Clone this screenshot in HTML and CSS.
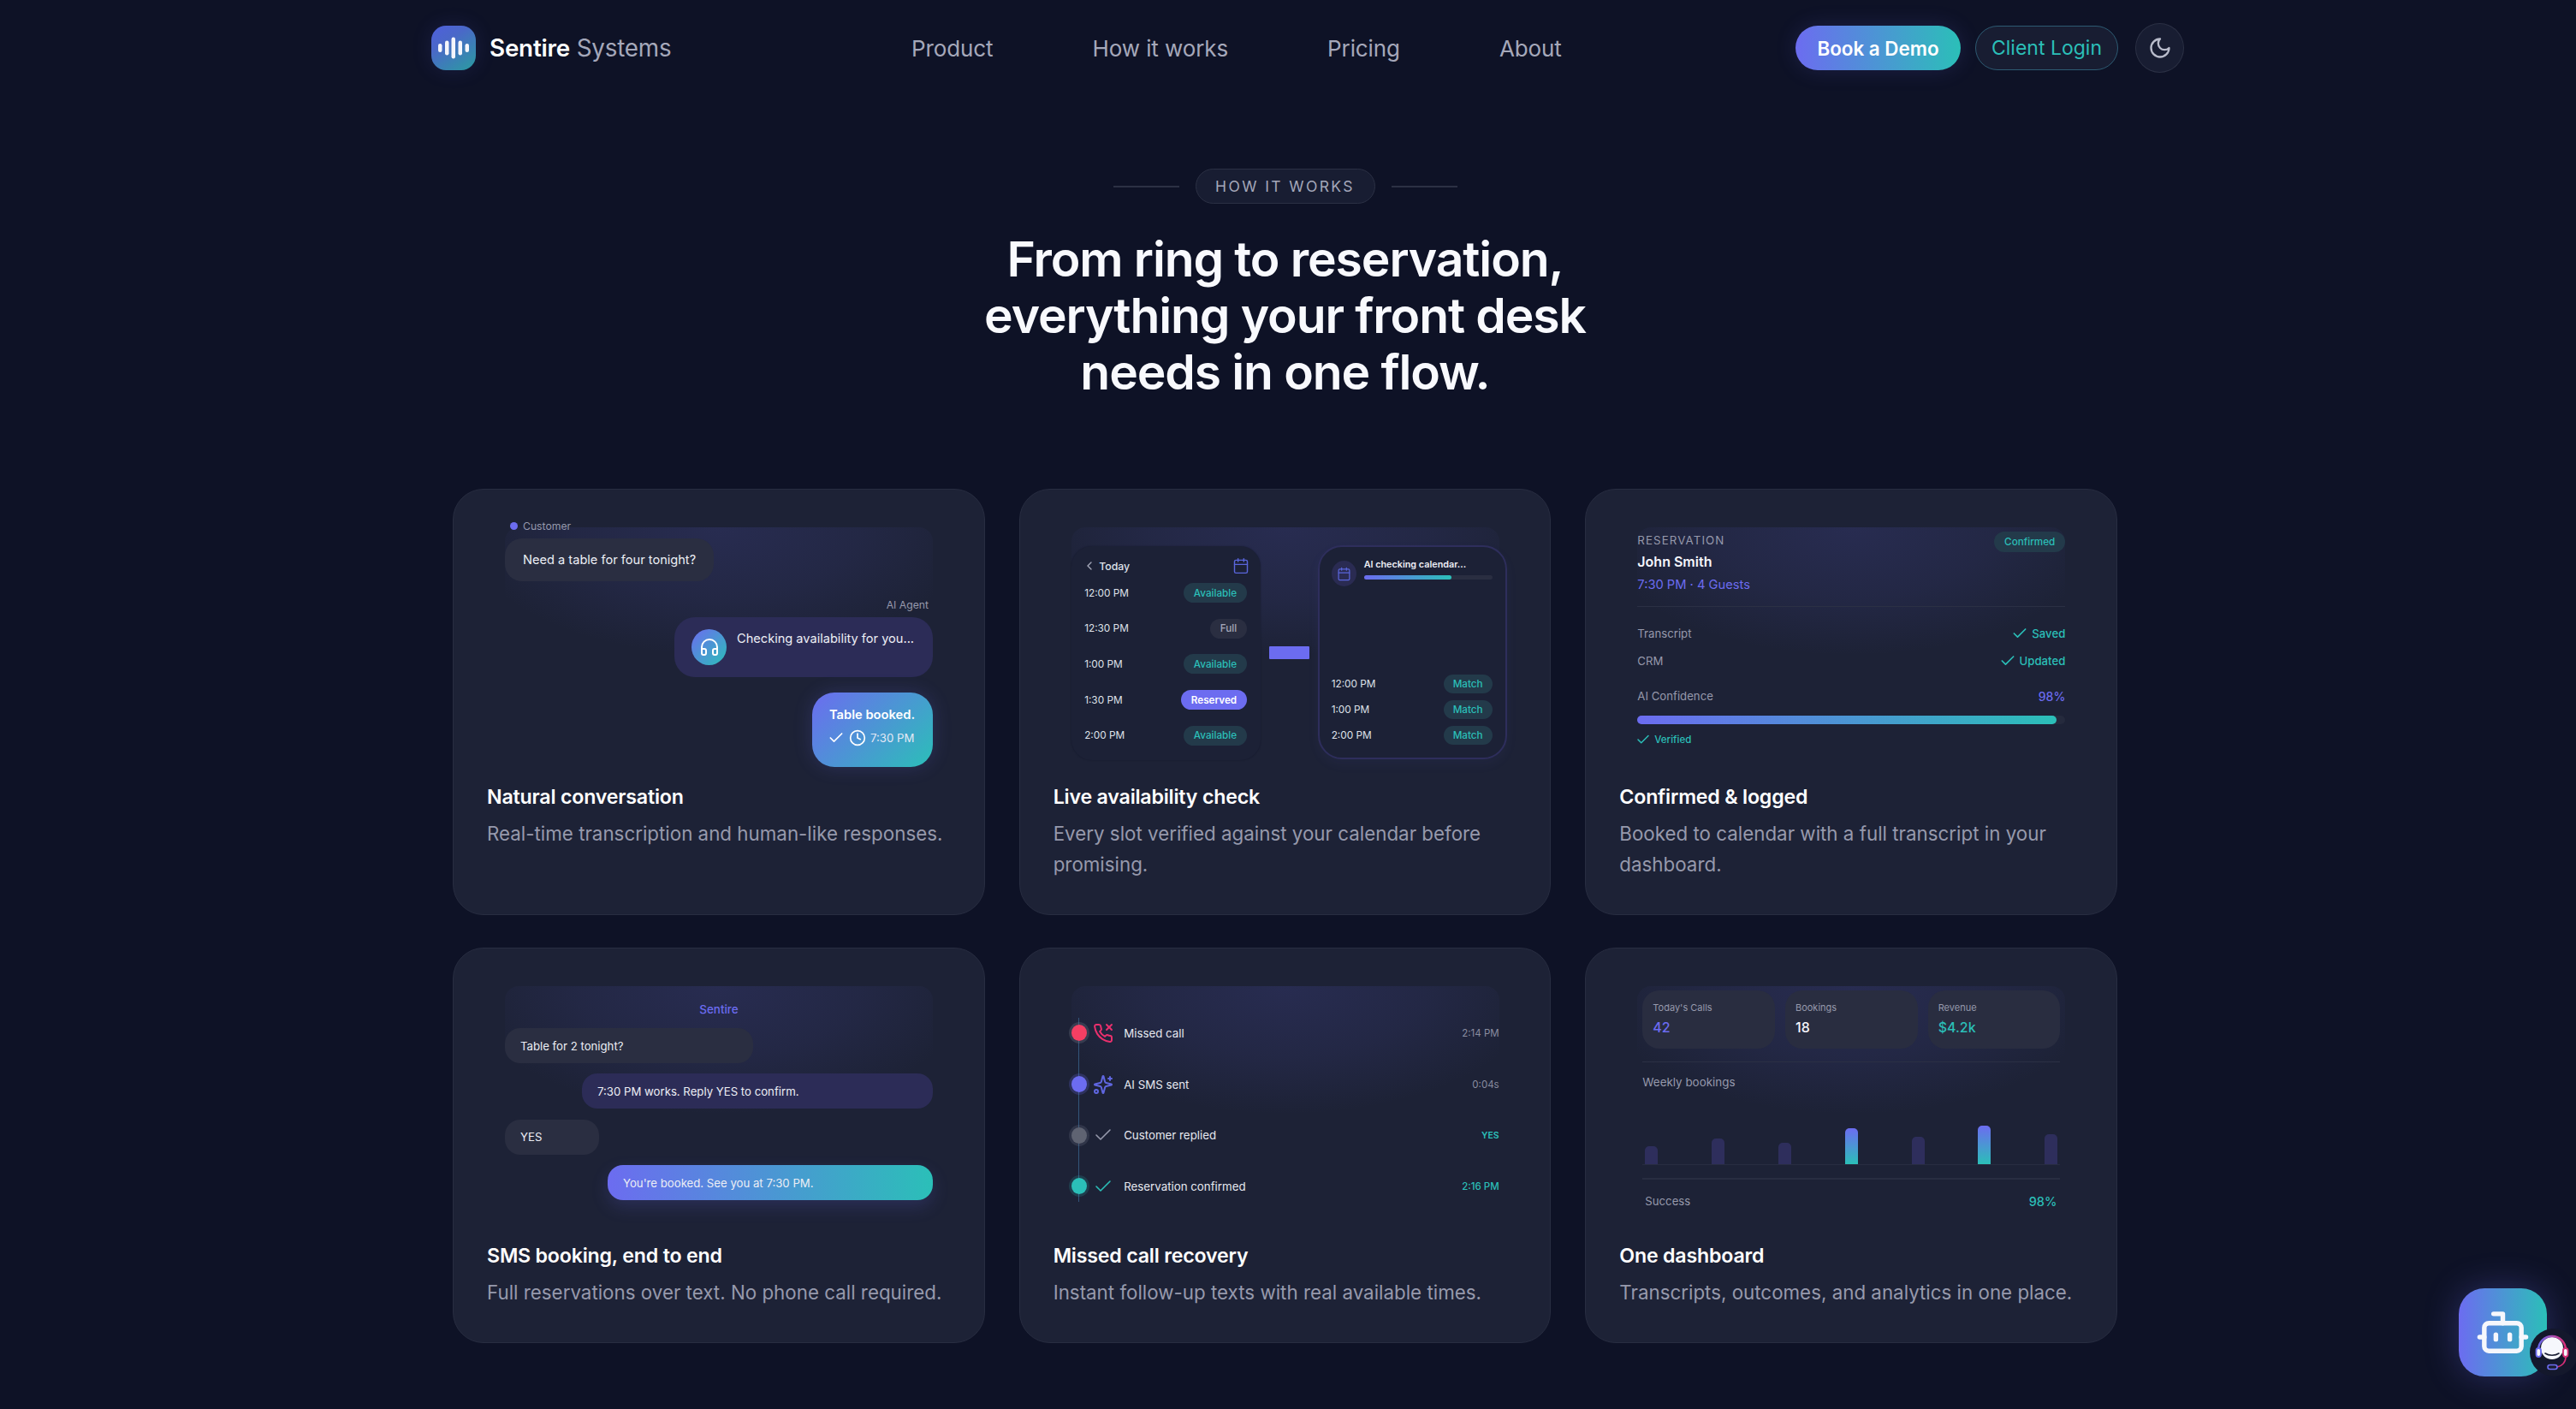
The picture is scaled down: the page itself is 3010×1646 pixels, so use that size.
FILE: index.html
```html
<!DOCTYPE html>
<html lang="en">
<head>
<meta charset="utf-8">
<title>Sentire Systems – How it works</title>
<link rel="stylesheet" href="styles.css">
</head>
<body>
<header class="nav">
  <a class="brand">
    <span class="logo">
      <svg viewBox="0 0 52 52" width="52" height="52"><g fill="#f4f5fb"><rect x="8" y="21" width="4.5" height="10" rx="2.2"/><rect x="16" y="17.5" width="4.5" height="17" rx="2.2"/><rect x="23.5" y="13.5" width="4.5" height="25" rx="2.2"/><rect x="31.5" y="17.5" width="4.5" height="17" rx="2.2"/><rect x="39.5" y="21" width="4.5" height="10" rx="2.2"/></g></svg>
    </span>
    <span class="brand-name"><b>Sentire</b> Systems</span>
  </a>
  <nav class="links"><a>Product</a><a>How it works</a><a>Pricing</a><a>About</a></nav>
  <div class="actions">
    <a class="btn btn-primary">Book a Demo</a>
    <a class="btn btn-ghost">Client Login</a>
    <a class="moon"><svg class="ic" viewBox="0 0 24 24" width="28" height="28"><path d="M12 3a6 6 0 0 0 9 9 9 9 0 1 1-9-9Z"/></svg></a>
  </div>
</header>

<main class="section">
  <div class="kicker"><i></i><span>HOW IT WORKS</span><i></i></div>
  <h1>From ring to reservation,<br>everything your front desk<br>needs in one flow.</h1>

  <div class="grid">
    <article class="card">
      <div class="visual">
        <div class="who"><i class="who-dot"></i>Customer</div>
        <div class="bubble b-grey b1">Need a table for four tonight?</div>
        <div class="who who-right">AI Agent</div>
        <div class="bubble b-indigo b2">
          <span class="avatar"><svg class="ic" viewBox="0 0 24 24" width="24" height="24"><path d="M3 14h3a2 2 0 0 1 2 2v3a2 2 0 0 1-2 2H5a2 2 0 0 1-2-2v-7a9 9 0 0 1 18 0v7a2 2 0 0 1-2 2h-1a2 2 0 0 1-2-2v-3a2 2 0 0 1 2-2h3"/></svg></span>
          <span class="b2-text">Checking availability for you...</span>
        </div>
        <div class="booked">
          <strong>Table booked.</strong>
          <span class="booked-row">
            <svg class="ic booked-check" viewBox="0 0 24 24" width="20" height="20"><path d="M20 6 9 17l-5-5"/></svg>
            <svg class="ic" viewBox="0 0 24 24" width="20" height="20"><circle cx="12" cy="12" r="10"/><path d="M12 6v6l4 2"/></svg>
            <em>7:30 PM</em>
          </span>
        </div>
      </div>
      <h3>Natural conversation</h3>
      <p>Real-time transcription and human-like responses.</p>
    </article>

    <article class="card">
      <div class="visual">
        <div class="avail">
          <div class="panel">
            <div class="panel-head">
              <svg class="ic chev" viewBox="0 0 24 24" width="16" height="16"><path d="m15 18-6-6 6-6"/></svg>
              <span>Today</span>
              <svg class="ic cal" viewBox="0 0 24 24" width="20" height="20"><path d="M8 2v4"/><path d="M16 2v4"/><rect x="3" y="4" width="18" height="18" rx="2"/><path d="M3 10h18"/></svg>
            </div>
            <div class="slot"><span>12:00 PM</span><b class="pill teal">Available</b></div>
            <div class="slot"><span>12:30 PM</span><b class="pill grey">Full</b></div>
            <div class="slot"><span>1:00 PM</span><b class="pill teal">Available</b></div>
            <div class="slot"><span>1:30 PM</span><b class="pill violet">Reserved</b></div>
            <div class="slot"><span>2:00 PM</span><b class="pill teal">Available</b></div>
          </div>
          <div class="connector"></div>
          <div class="panel panel-ai">
            <div class="ai-head">
              <span class="ai-icon"><svg class="ic cal" viewBox="0 0 24 24" width="17" height="17"><path d="M8 2v4"/><path d="M16 2v4"/><rect x="3" y="4" width="18" height="18" rx="2"/><path d="M3 10h18"/></svg></span>
              <div class="ai-body">
                <div class="ai-title">AI checking calendar...</div>
                <div class="progress"><i></i></div>
              </div>
            </div>
            <div class="ai-rows">
              <div class="ai-row"><span>12:00 PM</span><b class="pill teal">Match</b></div>
              <div class="ai-row"><span>1:00 PM</span><b class="pill teal">Match</b></div>
              <div class="ai-row"><span>2:00 PM</span><b class="pill teal">Match</b></div>
            </div>
          </div>
        </div>
      </div>
      <h3>Live availability check</h3>
      <p>Every slot verified against your calendar before promising.</p>
    </article>

    <article class="card">
      <div class="visual">
        <div class="res-head">
          <div>
            <div class="res-label">RESERVATION</div>
            <div class="res-name">John Smith</div>
            <div class="res-time">7:30 PM · 4 Guests</div>
          </div>
          <b class="pill teal res-pill">Confirmed</b>
        </div>
        <div class="res-row first"><span>Transcript</span><b><svg class="ic" viewBox="0 0 24 24" width="20" height="20"><path d="M20 6 9 17l-5-5"/></svg>Saved</b></div>
        <div class="res-row"><span>CRM</span><b><svg class="ic" viewBox="0 0 24 24" width="20" height="20"><path d="M20 6 9 17l-5-5"/></svg>Updated</b></div>
        <div class="res-row conf"><span>AI Confidence</span><strong>98%</strong></div>
        <div class="meter"><i></i></div>
        <div class="verified"><svg class="ic" viewBox="0 0 24 24" width="18" height="18"><path d="M20 6 9 17l-5-5"/></svg>Verified</div>
      </div>
      <h3>Confirmed &amp; logged</h3>
      <p>Booked to calendar with a full transcript in your dashboard.</p>
    </article>

    <article class="card">
      <div class="visual">
        <div class="sms-from">Sentire</div>
        <div class="sms">
          <div class="msg b-grey w58">Table for 2 tonight?</div>
          <div class="msg b-indigo w82 right">7:30 PM works. Reply YES to confirm.</div>
          <div class="msg b-grey w22">YES</div>
          <div class="msg grad w76 right">You're booked. See you at 7:30 PM.</div>
        </div>
      </div>
      <h3>SMS booking, end to end</h3>
      <p>Full reservations over text. No phone call required.</p>
    </article>

    <article class="card">
      <div class="visual">
        <div class="timeline">
          <div class="tl-row">
            <i class="tl-dot red"></i>
            <svg class="ic tl-ic c-red" viewBox="0 0 24 24" width="24" height="24"><path d="m16 2 6 6"/><path d="m22 2-6 6"/><path d="M22 16.92v3a2 2 0 0 1-2.18 2 19.79 19.79 0 0 1-8.63-3.07 19.5 19.5 0 0 1-6-6 19.79 19.79 0 0 1-3.07-8.67A2 2 0 0 1 4.11 2h3a2 2 0 0 1 2 1.72 12.84 12.84 0 0 0 .7 2.81 2 2 0 0 1-.45 2.11L8.09 9.91a16 16 0 0 0 6 6l1.27-1.27a2 2 0 0 1 2.11-.45 12.84 12.84 0 0 0 2.81.7A2 2 0 0 1 22 16.92z"/></svg>
            <span>Missed call</span><small>2:14 PM</small>
          </div>
          <div class="tl-row">
            <i class="tl-dot vio"></i>
            <svg class="ic tl-ic c-vio" viewBox="0 0 24 24" width="24" height="24"><path d="M9.937 15.5A2 2 0 0 0 8.5 14.063l-6.135-1.582a.5.5 0 0 1 0-.962L8.5 9.936A2 2 0 0 0 9.937 8.5l1.582-6.135a.5.5 0 0 1 .963 0L14.063 8.5A2 2 0 0 0 15.5 9.937l6.135 1.581a.5.5 0 0 1 0 .964L15.5 14.063a2 2 0 0 0-1.437 1.437l-1.582 6.135a.5.5 0 0 1-.963 0z"/><path d="M20 3v4"/><path d="M22 5h-4"/><circle cx="4" cy="20" r="2"/></svg>
            <span>AI SMS sent</span><small>0:04s</small>
          </div>
          <div class="tl-row">
            <i class="tl-dot gry"></i>
            <svg class="ic tl-ic c-gry" viewBox="0 0 24 24" width="24" height="24"><path d="M20 6 9 17l-5-5"/></svg>
            <span>Customer replied</span><small class="s-teal s-bold">YES</small>
          </div>
          <div class="tl-row">
            <i class="tl-dot tea"></i>
            <svg class="ic tl-ic c-tea" viewBox="0 0 24 24" width="24" height="24"><path d="M20 6 9 17l-5-5"/></svg>
            <span>Reservation confirmed</span><small class="s-teal s-med">2:16 PM</small>
          </div>
        </div>
      </div>
      <h3>Missed call recovery</h3>
      <p>Instant follow-up texts with real available times.</p>
    </article>

    <article class="card">
      <div class="visual">
        <div class="dash">
          <div class="stats">
            <div class="stat"><span>Today's Calls</span><b class="c-violet">42</b></div>
            <div class="stat"><span>Bookings</span><b>18</b></div>
            <div class="stat"><span>Revenue</span><b class="c-teal">$4.2k</b></div>
          </div>
          <div class="weekly">Weekly bookings</div>
          <div class="bars">
            <i style="height:21px"></i><i style="height:30px"></i><i style="height:25px"></i><i class="hi" style="height:42px"></i><i style="height:32px"></i><i class="hi" style="height:45px"></i><i style="height:35px"></i>
          </div>
          <div class="success"><span>Success</span><b>98%</b></div>
        </div>
      </div>
      <h3>One dashboard</h3>
      <p>Transcripts, outcomes, and analytics in one place.</p>
    </article>
  </div>
</main>

<aside class="fab">
  <svg class="ic" viewBox="0 0 24 24" width="65" height="65"><path d="M12 8V4H8"/><rect x="4" y="8" width="16" height="12" rx="2"/><path d="M2 14h2"/><path d="M20 14h2"/><path d="M15 13v2"/><path d="M9 13v2"/></svg>
  <span class="fab-badge">
    <svg viewBox="0 0 56 56" width="56" height="56">
      <defs><linearGradient id="band" x1="0" x2="1" y1="0" y2="0"><stop offset="0" stop-color="#6c6cf0"/><stop offset="1" stop-color="#e0307a"/></linearGradient></defs>
      <circle cx="26" cy="23" r="13" fill="#f6f7fc"/>
      <path d="M18 29c4 3 12 3 16 0" fill="none" stroke="#1a1e33" stroke-width="1.6" stroke-linecap="round"/>
      <path d="M10 25a16 16 0 0 1 32 0" fill="none" stroke="url(#band)" stroke-width="2.4"/>
      <rect x="7.5" y="23" width="5.5" height="10" rx="2.7" fill="#f6f7fc" stroke="#6c6cf0" stroke-width="1.8"/>
      <rect x="39" y="23" width="5.5" height="10" rx="2.7" fill="#f6f7fc" stroke="#d62f78" stroke-width="1.8"/>
      <path d="M42 33c0 7-5 11-10 12" fill="none" stroke="#d62f78" stroke-width="1.6"/>
      <rect x="21" y="42.5" width="11" height="5" rx="2.5" fill="#1a1e33" stroke="#6c6cf0" stroke-width="1.6"/>
    </svg>
  </span>
</aside>
</body>
</html>
```

FILE: styles.css
```css
* { box-sizing: border-box; }
html, body { margin: 0; height: 1646px; overflow: hidden; }
body {
  background: #0e1226;
  color: #f5f6fb;
  font-family: Inter, "Noto Sans", "Liberation Sans", sans-serif;
  -webkit-font-smoothing: antialiased;
}
svg { display: block; flex: none; }
.ic { fill: none; stroke: currentColor; stroke-width: 2; stroke-linecap: round; stroke-linejoin: round; }

/* nav */
.nav { display: flex; align-items: center; height: 112px; padding-left: 504px; width: 2552px; }
.brand { display: flex; align-items: center; gap: 16px; width: 561px; }
.logo {
  width: 52px; height: 52px; border-radius: 17px;
  background: linear-gradient(145deg, #4f5fdc 0%, #4a68c8 35%, #2a9ca0 100%);
  box-shadow: 0 0 24px rgba(100, 100, 240, .14);
}
.brand-name { font-size: 27.8px; letter-spacing: -.2px; color: #a5a8ba; }
.brand-name b { font-weight: 600; color: #fff; }
.links { display: flex; gap: 116px; font-size: 26px; letter-spacing: -.1px; color: #a5a8ba; }
.actions { display: flex; align-items: center; margin-left: auto; }
.btn { display: flex; align-items: center; justify-content: center; height: 52px; border-radius: 26px; }
.btn-primary { width: 193px; font-size: 22.4px; font-weight: 600; color: #fff; background: linear-gradient(90deg, #6c6cf0, #2bbfb8); box-shadow: 0 0 26px rgba(108, 108, 240, .16); }
.btn-ghost { width: 167px; margin-left: 17px; font-size: 23px; color: #2bbfb8; background: #181d32; border: 1.5px solid #2d5a72; }
.moon { display: flex; align-items: center; justify-content: center; width: 57px; height: 58px; margin-left: 20px; border-radius: 50%; color: #b9bccb; background: #181d32; border: 1.5px solid #2b3044; }

/* heading */
.section { width: 1945px; margin-left: 529px; }
.kicker { display: flex; align-items: center; justify-content: center; gap: 19px; margin-top: 85px; }
.kicker i { width: 77px; height: 2px; background: #2c3144; }
.kicker span { display: flex; align-items: center; justify-content: center; width: 210px; height: 41px; border-radius: 21px; border: 1.5px solid #2b3044; background: #181d32; color: #a5a8ba; font-size: 17.5px; letter-spacing: 2.4px; }
h1 { margin: 32px 0 0; text-align: center; font-size: 57px; line-height: 66px; font-weight: 600; letter-spacing: -1.1px; color: #f8f9fd; }

/* grid */
.grid { display: grid; grid-template-columns: repeat(3, 1fr); grid-template-rows: 498px 462px; gap: 38px 40px; margin-top: 103px; }
.card { padding: 44px 39px 0; border-radius: 36px; background: #1d2236; border: 1px solid #282d41; }
.card h3 { margin: 0; font-size: 23.2px; line-height: 34px; font-weight: 600; letter-spacing: -.2px; color: #fff; }
.card p { margin: 8px 0 0; font-size: 22.35px; line-height: 36px; color: #9699ac; }
.visual {
  position: relative; display: flow-root; width: 500px; height: 298px;
  margin-left: 21px;
}
.visual::before {
  content: ""; position: absolute; left: 0; right: 0; top: 0; height: 150px; border-radius: 16px;
  background: radial-gradient(ellipse 60% 100% at 50% 0, rgba(96, 96, 220, .16) 0%, rgba(96, 96, 220, .09) 55%, transparent 100%);
}
.visual > * { position: relative; }

/* card 1 */
.who { display: flex; align-items: center; gap: 6px; margin-top: -10px; padding-left: 6px; height: 16px; font-size: 12.2px; color: #9699ac; }
.who-dot { width: 9px; height: 9px; border-radius: 50%; background: #6c6cf0; }
.who-right { justify-content: flex-end; margin-top: 19px; padding: 0 5px 0 0; }
.bubble { display: flex; color: #eceef5; font-size: 14.6px; }
.b-grey { background: #2a2e41; }
.b-indigo { background: #2c2c57; }
.b1 { width: fit-content; height: 50px; margin-top: 7px; padding: 0 21px; align-items: center; border-radius: 20px; }
.b2 { width: 302px; height: 70px; margin: 7px 0 0 198px; padding: 14px 0 0 20px; gap: 12px; border-radius: 24px; }
.b2-text { line-height: 22px; }
.avatar { display: flex; align-items: center; justify-content: center; width: 41px; height: 42px; border-radius: 50%; color: #fff; background: linear-gradient(135deg, #6c6cf0, #2bbfb8); }
.booked { width: 141px; height: 87px; margin: 18px 0 0 359px; padding: 16px 0 0 20px; border-radius: 26px; background: linear-gradient(135deg, #6c6cf0, #2bbfb8); box-shadow: 0 0 22px rgba(108, 108, 240, .2); font-size: 14.7px; color: #fff; }
.booked strong { display: block; font-weight: 600; line-height: 20px; }
.booked-row { display: flex; align-items: center; gap: 5px; margin-top: 7px; }
.booked-check { margin-left: -2px; }
.booked-row em { font-style: normal; font-size: 13.2px; color: #e4e8f5; }

/* card 2 */
.avail { display: flex; gap: 10px; width: 510px; height: 250px; margin-top: 22px; }
.panel { width: 221px; height: 250px; border-radius: 24px; padding: 12px 15.5px 0; background: #1c2136; box-shadow: 0 0 2px rgba(10, 12, 30, .4); }
.panel-head { display: flex; align-items: center; gap: 3.5px; height: 22px; font-size: 12.3px; font-weight: 500; color: #dfe1ea; }
.chev { color: #a5a8ba; margin-left: -2.5px; }
.cal { color: #5a66dc; margin: 0 -2.5px 0 auto; stroke-width: 1.7; }
.slot { display: flex; align-items: center; justify-content: space-between; height: 41.6px; font-size: 11.8px; color: #dfe1ea; }
.pill { display: flex; align-items: center; height: 23px; padding: 0 12px; border-radius: 12px; font-size: 11.7px; font-weight: 500; }
.pill.teal { color: #2bbfb8; background: #233a4a; }
.pill.grey { color: #a5a8ba; background: #2a2e41; }
.pill.violet { color: #fff; background: #6c6cf0; font-weight: 600; }
.connector { flex: none; width: 47px; height: 15px; margin-top: 117px; border-radius: 1px; background: #6c6cf0; }
.panel-ai { display: flex; flex-direction: column; height: 250px; padding: 16px 15px 11px 14px; border: 2px solid #2e2e5c; border-radius: 28px; margin-top: -1px; box-shadow: 0 6px 14px rgba(96, 96, 220, .06); }
.ai-head { display: flex; gap: 9px; }
.ai-icon { display: flex; align-items: center; justify-content: center; width: 29px; height: 30px; border-radius: 50%; background: #2a2b52; }
.ai-icon .cal { margin: 0; }
.ai-body { flex: 1; }
.ai-title { margin-top: -4px; font-size: 10.8px; line-height: 18px; font-weight: 600; color: #eceef5; }
.progress { height: 5px; margin-top: 3px; border-radius: 3px; background: #2a2e41; }
.progress i { display: block; width: 68%; height: 100%; border-radius: 3px; background: linear-gradient(90deg, #6c6cf0, #2bbfb8); }
.ai-rows { margin-top: auto; }
.ai-row { display: flex; align-items: center; justify-content: space-between; height: 30px; font-size: 11.8px; color: #dfe1ea; }
.ai-row .pill { height: 22.5px; padding: 0 11px; }

/* card 3 */
.res-head { display: flex; justify-content: space-between; align-items: flex-start; height: 93px; border-bottom: 1px solid #2b3044; }
.res-label { margin-top: 6px; font-size: 13.3px; line-height: 18px; letter-spacing: 1.1px; color: #9699ac; }
.res-name { margin-top: 4px; font-size: 16px; line-height: 24px; font-weight: 600; color: #f5f6fb; }
.res-time { margin-top: 4px; font-size: 14.7px; line-height: 22px; color: #6c6cf0; }
.res-pill { margin-top: 5px; height: 24px; padding: 0 12px; }
.res-row { display: flex; justify-content: space-between; align-items: center; height: 20px; margin-top: 12px; font-size: 13.2px; color: #9699ac; }
.res-row.first { margin-top: 21px; }
.res-row.conf { margin-top: 21px; }
.res-row b { display: flex; align-items: center; gap: 4px; font-weight: 500; color: #2bbfb8; }
.res-row strong { font-size: 14px; font-weight: 500; color: #6c6cf0; }
.meter { height: 10px; margin-top: 13px; border-radius: 5px; background: #252a3d; }
.meter i { display: block; width: 98%; height: 100%; border-radius: 5px; background: linear-gradient(90deg, #6c6cf0, #2bbfb8); }
.verified { display: flex; align-items: center; gap: 4px; margin-top: 9px; margin-left: -2px; height: 18px; font-size: 11.5px; font-weight: 500; color: #2bbfb8; }

/* card 4 */
.sms-from { margin-top: 18px; text-align: center; font-size: 13.4px; line-height: 18px; font-weight: 500; color: #6c6cf0; }
.sms { display: flex; flex-direction: column; gap: 12.4px; margin-top: 13px; }
.msg { display: flex; align-items: center; height: 41px; padding: 0 18px; border-radius: 18px; font-size: 13.2px; color: #eceef5; }
.right { align-self: flex-end; }
.w58 { width: 58%; } .w82 { width: 82%; } .w22 { width: 22%; } .w76 { width: 76%; }
.grad { background: linear-gradient(90deg, #6c6cf0, #2bbfb8); box-shadow: 0 8px 20px rgba(108, 108, 240, .18); }

/* card 5 */
.timeline { margin-top: 25px; }
.timeline::before { content: ""; position: absolute; left: 8px; top: 12px; width: 1.5px; height: 215px; background: #33557a; }
.tl-row { position: relative; display: flex; align-items: center; height: 59.7px; font-size: 13.3px; color: #e6e8f0; }
.tl-dot { flex: none; width: 18px; height: 19px; border-radius: 50%; }
.red { background: #f43f63; box-shadow: 0 0 0 3px rgba(120, 124, 140, .28); }
.vio { background: #6c6cf0; box-shadow: 0 0 0 3px rgba(108, 108, 240, .22); }
.gry { background: #5f6372; box-shadow: 0 0 0 3px rgba(120, 124, 140, .22); }
.tea { background: #2bbfb8; box-shadow: 0 0 0 3px rgba(43, 191, 184, .18); }
.tl-ic { margin: 0 12px 0 7.5px; }
.c-red { color: #e9306d; } .c-vio { color: #5f66e0; } .c-gry { color: #9699ac; } .c-tea { color: #2bbfb8; }
.tl-ic.c-gry, .tl-ic.c-tea { stroke-width: 1.6; }
.tl-row small { margin-left: auto; font-size: 11.5px; color: #8a8da0; }
.tl-row small.s-teal { color: #2bbfb8; }
.tl-row small.s-bold { font-size: 10.5px; font-weight: 600; }
.s-med { font-weight: 500; }

/* card 6 */
.dash { padding: 5px 6px 0; }
.stats { display: grid; grid-template-columns: repeat(3, 1fr); gap: 12px; padding-bottom: 15px; border-bottom: 1px solid #2b3044; }
.stat { display: flex; flex-direction: column; height: 68px; padding: 12px 12px 0; border-radius: 20px; background: #292d40; font-size: 11px; color: #9699ac; }
.stat span { line-height: 16px; }
.stat b { margin-top: 3px; font-size: 16px; line-height: 24px; font-weight: 500; color: #f5f6fb; }
.c-violet.c-violet { color: #6c6cf0; } .c-teal.c-teal { color: #2bbfb8; }
.weekly { margin-top: 13px; font-size: 13.4px; line-height: 20px; color: #9699ac; }
.bars { display: flex; align-items: flex-end; justify-content: space-between; height: 87px; padding: 0 3px; border-bottom: 1px solid #282d41; }
.bars i { width: 15px; border-radius: 5px 5px 0 0; background: #2e2e5c; }
.bars i.hi { background: linear-gradient(180deg, #6c6cf0, #2bbfb8); }
.success { display: flex; justify-content: space-between; align-items: center; height: 52px; padding: 0 4px 0 3px; border-top: 2px solid #282d41; margin-top: 15px; font-size: 13.2px; color: #9699ac; }
.success b { font-size: 14.5px; font-weight: 500; color: #2bbfb8; }

/* floating assistant */
.fab { position: fixed; left: 2873px; top: 1505px; display: flex; align-items: center; justify-content: center; width: 103px; height: 103px; border-radius: 30px; color: #f6f7fc; background: linear-gradient(90deg, #6c6cf0, #2bbfb8); box-shadow: 0 0 40px rgba(108, 108, 240, .3); }
.fab > .ic { stroke-width: 2; }
.fab-badge { position: absolute; left: 83px; top: 47px; width: 56px; height: 56px; border-radius: 50%; background: #14182c; }
```
